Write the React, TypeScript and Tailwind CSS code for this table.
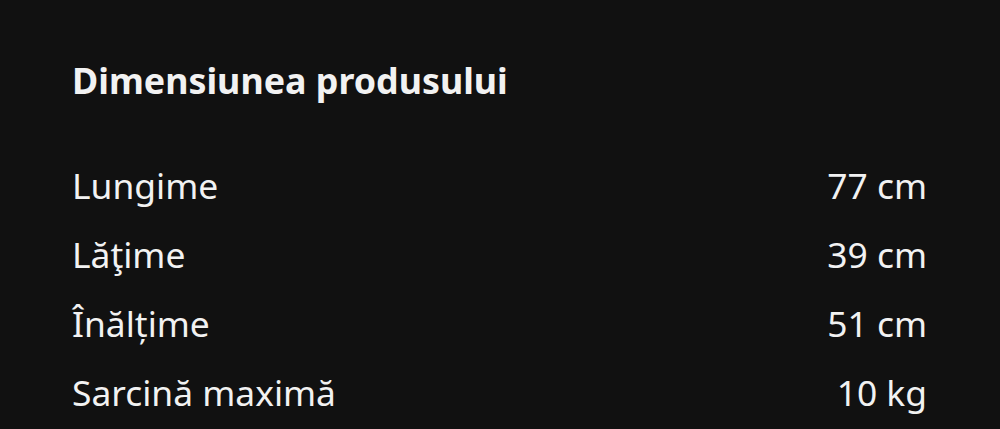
export default function App() {
  const rows = [
    ["Lungime", "77 cm"],
    ["Lăţime", "39 cm"],
    ["Înălțime", "51 cm"],
    ["Sarcină maximă", "10 kg"],
  ];
  return (
    <div
      className="w-[1000px] h-[429px] bg-[#111111] text-[#f2f2f2] pl-[72px] pr-[73px] pt-[56px] overflow-hidden"
      style={{ fontFamily: '"Noto Sans", sans-serif' }}
    >
      <h2 className="text-[35.8px] font-bold leading-[48px]">Dimensiunea produsului</h2>
      <div className="mt-[47px] flex flex-col">
        {rows.map(([k, v]) => (
          <div key={k} className="flex justify-between text-[35.4px] leading-[69px]">
            <span>{k}</span>
            <span>{v}</span>
          </div>
        ))}
      </div>
    </div>
  );
}
